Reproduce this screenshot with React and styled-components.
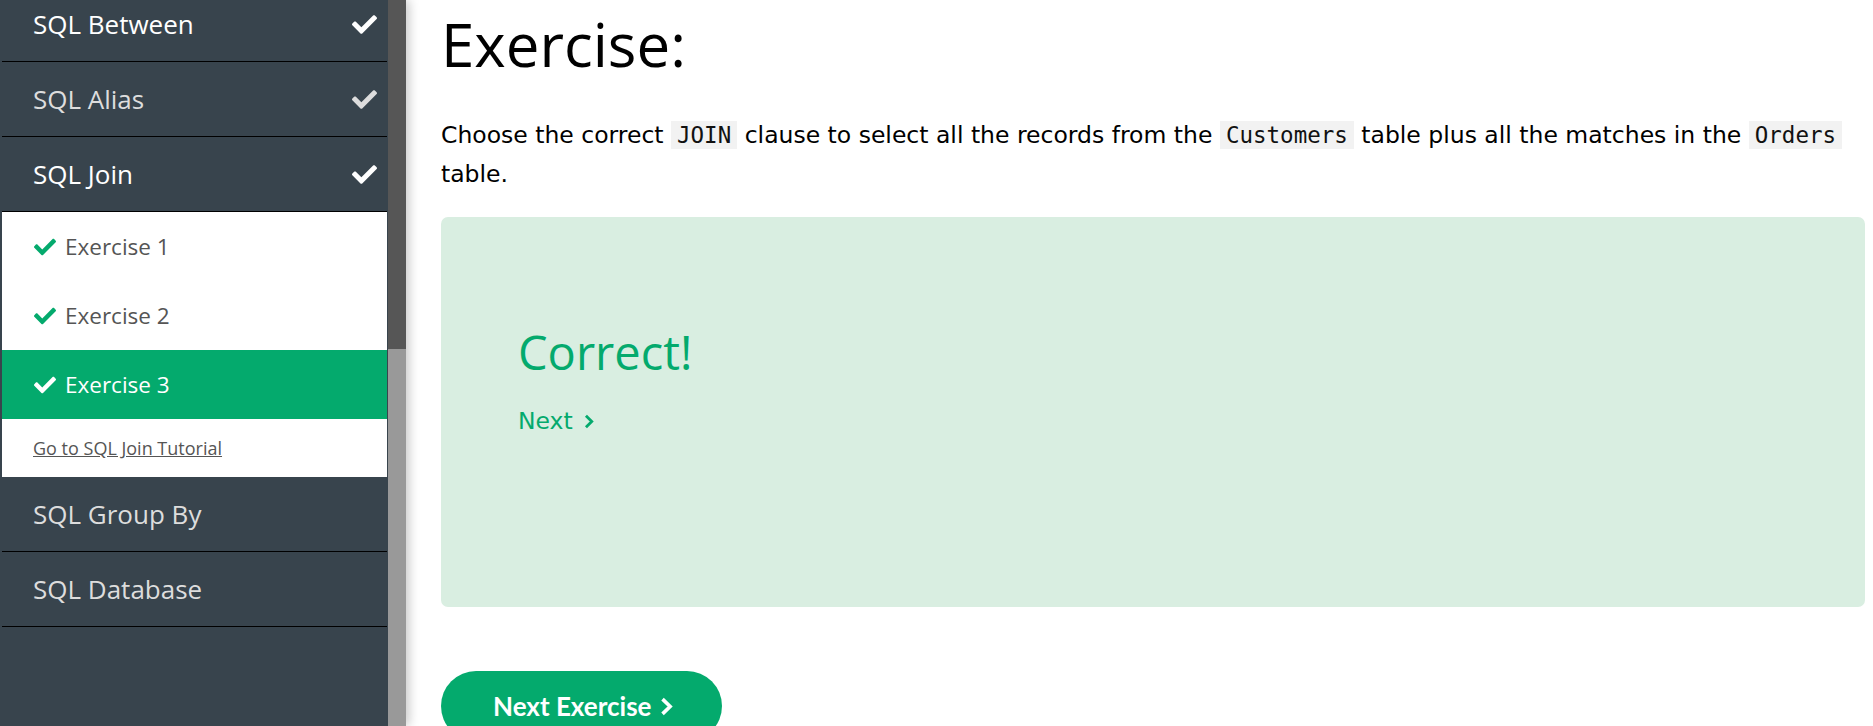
import React from 'react';
import styled, { createGlobalStyle } from 'styled-components';
import { FaCheck } from 'react-icons/fa';

const GlobalStyle = createGlobalStyle`
  html, body {
    margin: 0;
    padding: 0;
    height: 100%;
    overflow: hidden;
    background: #fff;
  }
  #root { height: 100%; }
  * { box-sizing: border-box; }
`;

const Page = styled.div`
  display: flex;
  height: 726px;
  overflow: hidden;
`;

const Aside = styled.aside`
  display: flex;
  flex: 0 0 auto;
  height: 100%;
  position: relative;
  z-index: 1;
  box-shadow: 3px 0 10px rgba(0, 0, 0, 0.22);
`;

const Nav = styled.nav`
  width: 388px;
  height: 100%;
  background: #38444d;
  padding: 0 1px 0 2px;
  overflow: hidden;
`;

const NavList = styled.div`
  margin-top: -13px;
`;

const TopicRow = styled.div`
  display: flex;
  align-items: center;
  justify-content: space-between;
  height: 75px;
  border-bottom: 1px solid #000;
  padding: 0 10px 0 31px;
  font-family: 'Open Sans', sans-serif;
  font-size: 26px;
  color: ${(p) => (p.$bright ? '#ffffff' : '#dddddd')};
  cursor: pointer;
`;

const SubPanel = styled.div`
  background: #fff;
`;

const ExRow = styled.div`
  display: flex;
  align-items: center;
  gap: 9px;
  height: 69px;
  padding-left: 32px;
  font-family: 'Open Sans', sans-serif;
  font-size: 22.5px;
  color: ${(p) => (p.$active ? '#ffffff' : '#555555')};
  background: ${(p) => (p.$active ? '#04AA6D' : 'transparent')};
  svg {
    color: ${(p) => (p.$active ? '#ffffff' : '#04AA6D')};
    flex: 0 0 auto;
  }
`;

const TutorialRow = styled.div`
  display: flex;
  align-items: center;
  height: 58px;
  padding-left: 31px;
`;

const TutorialLink = styled.a`
  font-family: 'Open Sans', sans-serif;
  font-size: 18px;
  color: #555;
  text-decoration: underline;
`;

const ScrollTrack = styled.div`
  width: 18px;
  height: 100%;
  background: #999999;
`;

const ScrollThumb = styled.div`
  height: 349px;
  background: #565656;
`;

const Main = styled.main`
  flex: 1;
  min-width: 0;
  padding: 0 8px 0 35px;
  font-family: 'DejaVu Sans', Verdana, sans-serif;
  font-size: 23.5px;
  color: #000;
`;

const Title = styled.h1`
  margin: 8px 0 0;
  font-family: 'Open Sans', sans-serif;
  font-weight: 400;
  font-size: 60px;
  line-height: 1.2;
  margin-bottom: 0;
`;

const Question = styled.p`
  margin: 36px 0 0;
  line-height: 39px;
`;

const Code = styled.code`
  font-family: 'DejaVu Sans Mono', 'Liberation Mono', monospace;
  font-size: 22.5px;
  background: #f2f2f2;
  padding: 1px 6px;
  color: #111;
`;

const ResultBox = styled.div`
  margin-top: 23px;
  height: 390px;
  background: #d9eee1;
  border-radius: 7px;
  padding: 107px 0 0 77px;
`;

const ResultTitle = styled.h2`
  margin: 0;
  font-family: 'Open Sans', sans-serif;
  font-weight: 400;
  font-size: 47px;
  line-height: 1.2;
  color: #04aa6d;
`;

const NextLink = styled.a`
  display: inline-flex;
  align-items: center;
  gap: 11px;
  margin-top: 22px;
  line-height: 39px;
  color: #04aa6d;
  text-decoration: none;
`;

const ButtonRow = styled.div`
  margin-top: 64px;
`;

const NextButton = styled.a`
  display: inline-flex;
  align-items: center;
  gap: 9px;
  height: 70px;
  padding: 0 49px 0 52px;
  border-radius: 35px;
  background: #04aa6d;
  color: #fff;
  font-family: Lato, 'Open Sans', sans-serif;
  font-weight: 700;
  font-size: 26px;
  text-decoration: none;
`;

const Chevron = ({ w, h, sw }) => (
  <svg width={w} height={h} viewBox={`0 0 ${w} ${h}`} fill="none">
    <polyline
      points={`${sw * 0.7},${sw * 0.6} ${w - sw * 0.8},${h / 2} ${sw * 0.7},${h - sw * 0.6}`}
      stroke="currentColor"
      strokeWidth={sw}
      strokeLinejoin="miter"
      strokeLinecap="butt"
    />
  </svg>
);

const topicsBefore = [
  { name: 'SQL Between', bright: true, done: true },
  { name: 'SQL Alias', bright: false, done: true },
  { name: 'SQL Join', bright: true, done: true },
];

const topicsAfter = [
  { name: 'SQL Group By', bright: false },
  { name: 'SQL Database', bright: false },
];

const exercises = [
  { label: 'Exercise 1', active: false },
  { label: 'Exercise 2', active: false },
  { label: 'Exercise 3', active: true },
];

export default function App() {
  return (
    <>
      <GlobalStyle />
      <Page>
        <Aside>
          <Nav>
            <NavList>
              {topicsBefore.map((t) => (
                <TopicRow key={t.name} $bright={t.bright}>
                  <span>{t.name}</span>
                  {t.done && <FaCheck size={25} />}
                </TopicRow>
              ))}
              <SubPanel>
                {exercises.map((e) => (
                  <ExRow key={e.label} $active={e.active}>
                    <FaCheck size={22} />
                    <span>{e.label}</span>
                  </ExRow>
                ))}
                <TutorialRow>
                  <TutorialLink href="#">Go to SQL Join Tutorial</TutorialLink>
                </TutorialRow>
              </SubPanel>
              {topicsAfter.map((t) => (
                <TopicRow key={t.name} $bright={t.bright}>
                  <span>{t.name}</span>
                </TopicRow>
              ))}
            </NavList>
          </Nav>
          <ScrollTrack>
            <ScrollThumb />
          </ScrollTrack>
        </Aside>
        <Main>
          <Title>Exercise:</Title>
          <Question>
            Choose the correct <Code>JOIN</Code> clause to select all the records from the{' '}
            <Code>Customers</Code> table plus all the matches in the <Code>Orders</Code> table.
          </Question>
          <ResultBox>
            <ResultTitle>Correct!</ResultTitle>
            <NextLink href="#">
              <span>Next</span>
              <Chevron w={10} h={15} sw={2.8} />
            </NextLink>
          </ResultBox>
          <ButtonRow>
            <NextButton href="#">
              <span>Next Exercise</span>
              <Chevron w={13} h={19} sw={3.6} />
            </NextButton>
          </ButtonRow>
        </Main>
      </Page>
    </>
  );
}
